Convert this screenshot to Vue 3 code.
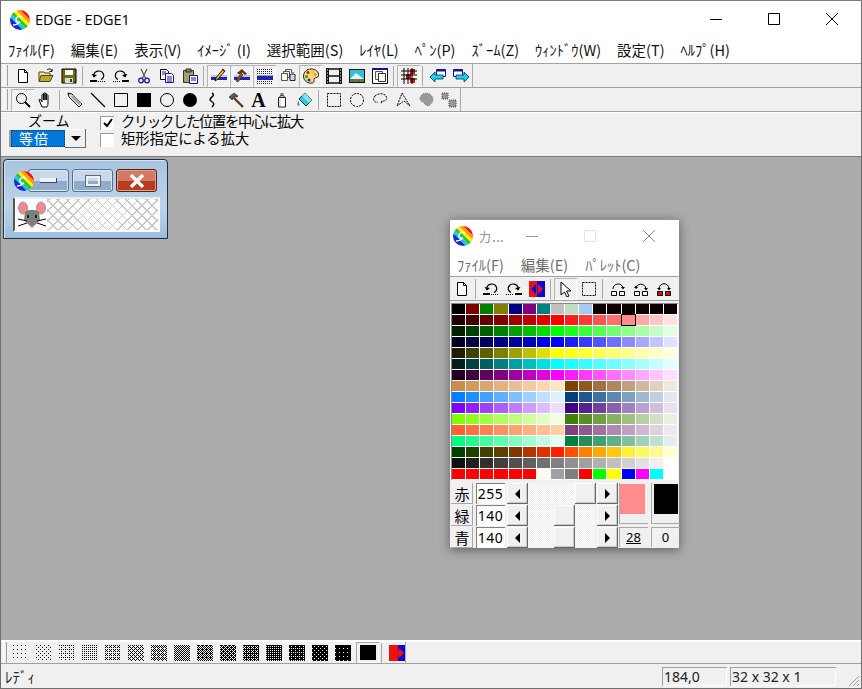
<template>
  <div class="edge">
    <!-- shared icon sheet -->
    <svg class="sheet" width="0" height="0">
      <defs>
        <clipPath id="logoClip"><circle cx="10" cy="10" r="10" /></clipPath>
        <symbol id="logo" viewBox="0 0 20 20">
          <g clip-path="url(#logoClip)">
            <g transform="rotate(45 10 10)">
              <rect x="-6" y="-6" width="32" height="9" fill="#ff1010" />
              <rect x="-6" y="3" width="32" height="3" fill="#ff9900" />
              <rect x="-6" y="6" width="32" height="3" fill="#ffee00" />
              <rect x="-6" y="9" width="32" height="3" fill="#22cc22" />
              <rect x="-6" y="12" width="32" height="3" fill="#19c8e8" />
              <rect x="-6" y="15" width="32" height="11" fill="#1a28d0" />
            </g>
          </g>
          <path d="M12 7c-3-2-6 0-6 3 0 2 2 3 4 2-2 2-4 3-7 3" fill="none" stroke="#fff" stroke-width="1.400" />
        </symbol>
        <symbol id="new" viewBox="0 0 16 16"><path d="M3.500 1.500h6l3 3v10h-9zM9.500 1.500v3h3" fill="#fff" stroke="#000" /></symbol>
        <symbol id="open" viewBox="0 0 16 16">
          <path d="M1 4h5l1 1h5v8H1z" fill="#f6e27a" stroke="#4d4a10" />
          <path d="M3 7.500h12l-3 6H1z" fill="#b8a635" stroke="#4d4a10" />
          <path d="M9 2c2-2 4-1 5 1M14 1v2.500h-2.500" fill="none" stroke="#000" />
        </symbol>
        <symbol id="save" viewBox="0 0 16 16">
          <path d="M1 1h14v14H1z" fill="#6e6e10" stroke="#000" />
          <path d="M4 2h8v5H4z" fill="#fff" /><path d="M4 10h8v5H4z" fill="#d8d8d8" /><path d="M9 11h2v3H9z" fill="#333" />
        </symbol>
        <symbol id="undo" viewBox="0 0 16 16">
          <path d="M4 9a5 4.500 0 1 1 7 2.500" fill="none" stroke="#000" stroke-width="1.200" /><path d="M1.500 6l2.500 3.500 3-2.500z" fill="#000" />
          <path d="M0 13h7" stroke="#000" stroke-width="2" /><path d="M8 13.500h8" stroke="#000" stroke-dasharray="1 1" />
        </symbol>
        <symbol id="redo" viewBox="0 0 16 16">
          <path d="M12 9a5 4.500 0 1 0-7 2.500" fill="none" stroke="#000" stroke-width="1.200" /><path d="M14.500 6L12 9.500 9 7z" fill="#000" />
          <path d="M9 13h7" stroke="#000" stroke-width="2" /><path d="M0 13.500h8" stroke="#000" stroke-dasharray="1 1" />
        </symbol>
        <symbol id="cut" viewBox="0 0 16 16">
          <path d="M5 1l4.500 9M11 1L6.500 10" stroke="#555" stroke-width="1.200" />
          <circle cx="5" cy="12.500" r="2.300" fill="none" stroke="#14149a" stroke-width="1.300" /><circle cx="11" cy="12.500" r="2.300" fill="none" stroke="#14149a" stroke-width="1.300" />
        </symbol>
        <symbol id="copy" viewBox="0 0 16 16">
          <path d="M1.500 1.500h6l2 2v8h-8z" fill="#fff" stroke="#000" /><path d="M6.500 5.500h6l2 2v7h-8z" fill="#fff" stroke="#14149a" />
          <path d="M3 4h4M3 6h3M8 9h5M8 11h5M8 13h5" stroke="#14149a" />
        </symbol>
        <symbol id="paste" viewBox="0 0 16 16">
          <path d="M1.500 2.500h10v12h-10z" fill="#a8a060" stroke="#333" /><path d="M4 1h5v3H4z" fill="#888" stroke="#222" />
          <path d="M7.500 7.500h8v8h-8z" fill="#fff" stroke="#14149a" /><path d="M9 10h5M9 12h5" stroke="#14149a" />
        </symbol>
        <symbol id="pen1" viewBox="0 0 16 16">
          <path d="M0 9h16v3H0z" fill="#2222aa" /><path d="M0 8h16" stroke="#8ba3d8" />
          <path d="M12 1l2 2-7 8-3 2 1-3z" fill="#e8d020" stroke="#111" /><path d="M12 1l2 2-1 1-2-2z" fill="#d01010" />
        </symbol>
        <symbol id="pen2" viewBox="0 0 16 16">
          <path d="M0 9h16v3H0z" fill="#2222aa" /><path d="M0 8h16" stroke="#8ba3d8" />
          <path d="M3 5l5-4 5 5-2 1-3-2.500-3 2z" fill="#5a3010" /><path d="M7 5l-5 8 2 1 5-7z" fill="#8a5020" stroke="#321" stroke-width=".6" />
        </symbol>
        <symbol id="dots" viewBox="0 0 16 16">
          <path d="M0 1.500h16M0 3.500h16M0 5.500h16" stroke="#222" stroke-dasharray="1 1" /><path d="M0 8h16v4H0z" fill="#2222aa" />
          <path d="M0 7.500h16" stroke="#8ba3d8" /><path d="M0 13.500h16M0 15.500h16" stroke="#222" stroke-dasharray="1 1" />
        </symbol>
        <symbol id="layers" viewBox="0 0 16 16">
          <path d="M5.500 1.500h6v5h-6z" fill="#eee" stroke="#555" /><path d="M3.500 3.500h6v6h-6z" fill="#eee" stroke="#555" />
          <path d="M1.500 5.500h6v7h-6z" fill="#fff" stroke="#555" /><path d="M10 6.500h5v6h-5z" fill="#c8d8f0" stroke="#222" /><path d="M11 4h3v3h-3z" fill="#888" />
        </symbol>
        <symbol id="palette" viewBox="0 0 16 16">
          <path d="M8 1c5 0 8 3 7.500 6.500-.5 3-4 1.500-4.500 3.500-.3 2 1 3-1.500 4C5 16 .5 13 .5 8 .5 4 4 1 8 1z" fill="#f4d878" stroke="#222" />
          <circle cx="5" cy="4.500" r="1.500" fill="#d81818" /><circle cx="9.500" cy="4" r="1.500" fill="#d8d020" /><circle cx="3.500" cy="8.500" r="1.500" fill="#20a020" /><circle cx="6" cy="12" r="1.500" fill="#2030d0" /><circle cx="12" cy="6.500" r="1.200" fill="#ff7a20" />
        </symbol>
        <symbol id="film" viewBox="0 0 16 16">
          <path d="M0 0h3v16H0zM13 0h3v16h-3z" fill="#111" /><path d="M3 1h10M3 8h10M3 15h10" stroke="#111" stroke-width="1.500" />
          <path d="M1 2h1M1 5h1M1 8h1M1 11h1M1 14h1M14 2h1M14 5h1M14 8h1M14 11h1M14 14h1" stroke="#fff" />
        </symbol>
        <symbol id="picture" viewBox="0 0 16 16">
          <path d="M0 1h16v14H0z" fill="#111" /><path d="M1 2h14v9H1z" fill="#2fc0e0" /><path d="M1 11l6-6 8 6z" fill="#e8f4f8" /><path d="M1 11h14v3H1z" fill="#4a8a3a" />
          <path d="M3 12h2M8 13h3" stroke="#c03030" />
        </symbol>
        <symbol id="windows" viewBox="0 0 16 16">
          <path d="M.5.500h15v15H.5z" fill="#fff" stroke="#111" /><path d="M0 0h16v2H0z" fill="#14149a" />
          <path d="M3.500 3.500h7v8h-7z" fill="#eee" stroke="#555" /><path d="M6.500 5.500h7v8h-7z" fill="#fff" stroke="#333" />
        </symbol>
        <symbol id="grid" viewBox="0 0 16 16">
          <path d="M9 1h5v5H9zM5 6h5v5H5zM9 10h5v5H9z" fill="#d01818" />
          <path d="M0 3h16M0 7h16M0 11h16M3 0v16M7 0v16M11 0v16" stroke="#000" />
        </symbol>
        <symbol id="arrowL" viewBox="0 0 16 16">
          <path d="M6.500 1.500h9v7h-9z" fill="#fff" stroke="#14149a" /><path d="M6.500 1.500h9v2h-9z" fill="#14149a" />
          <path d="M0 9l5-5v3h8v4H5v3z" fill="#10d8e8" stroke="#0a2a6a" stroke-width=".8" />
        </symbol>
        <symbol id="arrowR" viewBox="0 0 16 16">
          <path d="M.5 1.500h9v7h-9z" fill="#fff" stroke="#14149a" /><path d="M.5 1.500h9v2h-9z" fill="#14149a" />
          <path d="M16 9l-5-5v3H3v4h8v3z" fill="#10d8e8" stroke="#0a2a6a" stroke-width=".8" />
        </symbol>
        <symbol id="zoom" viewBox="0 0 16 16"><circle cx="6.500" cy="6.500" r="5" fill="none" stroke="#000" /><path d="M10 10l5 5" stroke="#000" stroke-width="1.800" /></symbol>
        <symbol id="hand" viewBox="0 0 16 16">
          <path d="M4 15L1 8c0-1 1-1 2 0l1 2V3c0-1 1.500-1 1.500 0v5-6.500c0-1 1.500-1 1.500 0V8 2c0-1 1.500-1 1.500 0v6-4.500c0-1 1.500-1 1.500 0V11c0 2-.5 3-1 4z" fill="#fff" stroke="#000" />
        </symbol>
        <symbol id="pencil" viewBox="0 0 16 16">
          <path d="M1 1l4 1 10 10-3 3L2 5z" fill="#ddd" stroke="#222" /><path d="M4 5l8 8 2-2-8-8z" fill="#aaa" /><path d="M1 1l2 .500-1.500 1.500z" fill="#000" />
        </symbol>
        <symbol id="line" viewBox="0 0 16 16"><path d="M1 1l14 14" stroke="#000" stroke-width="1.200" /></symbol>
        <symbol id="rect" viewBox="0 0 16 16"><path d="M1.500 1.500h13v13h-13z" fill="none" stroke="#000" /></symbol>
        <symbol id="rectFill" viewBox="0 0 16 16"><path d="M1 1h14v14H1z" fill="#000" /></symbol>
        <symbol id="circle" viewBox="0 0 16 16"><circle cx="8" cy="8" r="6.500" fill="none" stroke="#000" /></symbol>
        <symbol id="circleFill" viewBox="0 0 16 16"><circle cx="8" cy="8" r="7" fill="#000" /></symbol>
        <symbol id="curve" viewBox="0 0 16 16"><path d="M7 1c5 3-5 5-1 8 3 2 4 3 1 6" fill="none" stroke="#000" stroke-width="1.500" /></symbol>
        <symbol id="hammer" viewBox="0 0 16 16">
          <path d="M6 6l9 9" stroke="#6a3a10" stroke-width="2.400" /><path d="M1 5l5-4 4 3-1 1-2 0-3 3z" fill="#555" stroke="#222" stroke-width=".6" />
        </symbol>
        <symbol id="spray" viewBox="0 0 16 16">
          <path d="M4.500 5.500h7v9.500h-7z" fill="#fff" stroke="#222" /><path d="M5.500 5.500l1-2h3l1 2z" fill="#ddd" stroke="#222" /><path d="M6.500 1h3v2.500h-3z" fill="#777" /><path d="M6 7v7" stroke="#bbb" />
        </symbol>
        <symbol id="fill" viewBox="0 0 16 16">
          <path d="M8 1l7 7-6 6-7-7z" fill="#30c8e0" stroke="#134" /><path d="M8 1l7 7-3 3-7-7z" fill="#8ae0ec" />
          <path d="M1.500 9c-1 2-1.500 3-1 4s2 1 2 0-.5-2-1-4z" fill="#20a090" />
        </symbol>
        <symbol id="selRect" viewBox="0 0 16 16"><path d="M1.500 1.500h13v13h-13z" fill="none" stroke="#000" stroke-dasharray="2 1" /></symbol>
        <symbol id="selCircle" viewBox="0 0 16 16"><circle cx="8" cy="8" r="6.500" fill="none" stroke="#000" stroke-dasharray="2 1" /></symbol>
        <symbol id="selLasso" viewBox="0 0 16 16"><path d="M3 4c3-3 9-3 11 0 2 3-1 6-4 5-1 0-1 2 0 3M3 4C0 7 2 11 6 10" fill="none" stroke="#000" stroke-dasharray="2 1" /></symbol>
        <symbol id="selPoly" viewBox="0 0 16 16"><path d="M7 1l8 13-6-5-7 5z" fill="none" stroke="#000" stroke-dasharray="2 1" /></symbol>
        <symbol id="blob" viewBox="0 0 16 16"><path d="M5 2c4-2 9 0 10 5 0 4-2 4-3 6-3 2-5-1-7-3C2 9 0 6 5 2z" fill="#999" stroke="#777" stroke-dasharray="1 1" /></symbol>
        <symbol id="pattern" viewBox="0 0 16 16">
          <path d="M1 1h6v6H1zM8 8h7v7H8z" fill="#999" stroke="#444" stroke-dasharray="1 1" />
        </symbol>
        <symbol id="swap" viewBox="0 0 16 16">
          <path d="M0 0h16v16H0z" fill="#0808d8" /><path d="M0 0h8v16H0z" fill="#f01010" /><path d="M2 8l5-5v10z" fill="#0808d8" /><path d="M14 8L9 3v10z" fill="#f01010" />
        </symbol>
        <symbol id="fgbg" viewBox="0 0 16 16">
          <path d="M0 0h16v16H0z" fill="#0808d8" /><path d="M0 0h9v16H0z" fill="#f01010" /><path d="M7 6h3V3l5 5-5 5v-3H7z" fill="#f01010" />
        </symbol>
        <symbol id="cursor" viewBox="0 0 16 16"><path d="M3 1l10 9H8.500l2.500 5-2 1-2.500-5L3 14z" fill="#fff" stroke="#000" /></symbol>
        <symbol id="link1" viewBox="0 0 16 16">
          <path d="M3 8c0-6 9-7 10-1" fill="none" stroke="#000" /><path d="M11 6h4l-2 2.500z" fill="#000" />
          <path d="M1.500 10.500h5v4h-5zM9.500 10.500h5v4h-5z" fill="#fff" stroke="#000" />
        </symbol>
        <symbol id="link2" viewBox="0 0 16 16">
          <path d="M3 8c0-6 9-7 10 0" fill="none" stroke="#000" /><path d="M1 7h4L3 4.500zM11 7h4l-2 2.500z" fill="#000" />
          <path d="M1.500 10.500h5v4h-5zM9.500 10.500h5v4h-5z" fill="#fff" stroke="#000" />
        </symbol>
        <symbol id="link3" viewBox="0 0 16 16">
          <path d="M3 8c0-7 10-7 10 0" fill="none" stroke="#000" /><path d="M1 7h4L3 9.500zM11 7h4l-2 2.500z" fill="#000" />
          <path d="M1.500 10.500h5v4h-5zM9.500 10.500h5v4h-5z" fill="#e01010" stroke="#000" />
        </symbol>
        <symbol id="mouse" viewBox="0 0 30 30">
          <ellipse cx="6" cy="8" rx="4.500" ry="6" fill="#f08a92" stroke="#999" />
          <ellipse cx="24" cy="8" rx="4.500" ry="6" fill="#f08a92" stroke="#999" />
          <path d="M8 12c3-3 11-3 14 0l1 8-8 8-8-8z" fill="#808080" />
          <path d="M11 15v3M19 15v3" stroke="#000" stroke-width="1.500" />
          <path d="M1 19l9 2M1 26l9-3M29 19l-9 2M29 26l-9-3" stroke="#000" />
          <path d="M13 26h4l-2 2z" fill="#f08a92" />
        </symbol>
      </defs>
    </svg>

    <header class="title">
      <svg class="logo"><use href="#logo" /></svg>
      <span class="title-text">EDGE - EDGE1</span>
      <div class="caption">
        <svg width="14" height="14" viewBox="0 0 14 14"><path d="M1 7.500h12" stroke="#000" /></svg>
        <svg width="14" height="14" viewBox="0 0 14 14"><path d="M1.500 1.500h11v11h-11z" fill="none" stroke="#000" /></svg>
        <svg width="14" height="14" viewBox="0 0 14 14"><path d="M1 1l12 12M13 1L1 13" stroke="#000" /></svg>
      </div>
    </header>

    <nav class="menu">
      <span v-for="m in menus" :key="m">{{ m }}</span>
    </nav>

    <div class="bar">
      <div class="tools">
        <i class="grip"></i>
        <template v-for="(t, i) in toolsTop" :key="i">
          <i v-if="t === '|'" class="sep"></i>
          <b v-else class="btn" :class="{ down: t.endsWith('*') }"><svg class="ic"><use :href="'#' + t.replace('*', '')" /></svg></b>
        </template>
      </div>
    </div>
    <div class="bar">
      <div class="tools">
        <i class="grip"></i>
        <template v-for="(t, i) in toolsDraw" :key="i">
          <i v-if="t === '|'" class="sep"></i>
          <b v-else-if="t === 'A'" class="btn letter">A</b>
          <b v-else class="btn" :class="{ down: t.endsWith('*') }"><svg class="ic"><use :href="'#' + t.replace('*', '')" /></svg></b>
        </template>
      </div>
    </div>

    <section class="options">
      <div class="zoom-box">
        <div class="zoom-label">ズーム</div>
        <div class="combo">
          <span class="combo-value">等倍</span>
          <span class="combo-btn"><i class="tri-down"></i></span>
        </div>
      </div>
      <div class="checks">
        <label class="check"><span class="box"><svg width="12" height="12" viewBox="0 0 12 12"><path d="M2 6l3 3 5-7" fill="none" stroke="#000" stroke-width="2" /></svg></span><span class="check-text tight">クリックした位置を中心に拡大</span></label>
        <label class="check"><span class="box"></span><span class="check-text">矩形指定による拡大</span></label>
      </div>
    </section>

    <main class="mdi">
      <div class="mini">
        <div class="mini-head">
          <svg class="logo"><use href="#logo" /></svg>
          <span class="glass"><i class="g-min"></i></span>
          <span class="glass"><i class="g-max"></i></span>
          <span class="glass red">
            <svg width="18" height="14" viewBox="0 0 18 14"><path d="M3 1l12 12M15 1L3 13" stroke="#fff" stroke-width="3.400" /></svg>
          </span>
        </div>
        <div class="mini-body">
          <svg class="mouse"><use href="#mouse" /></svg>
          <div class="checker"></div>
        </div>
      </div>

      <div class="pal">
        <div class="pal-title">
          <svg class="logo"><use href="#logo" /></svg>
          <span class="pal-name">カ...</span>
          <div class="pal-caption">
            <svg width="12" height="12" viewBox="0 0 12 12"><path d="M0 6.500h12" stroke="#9a9a9a" /></svg>
            <svg width="12" height="12" viewBox="0 0 12 12"><path d="M.5.500h11v11H.5z" fill="none" stroke="#e2e2e2" /></svg>
            <svg width="14" height="14" viewBox="0 0 14 14"><path d="M1 1l12 12M13 1L1 13" stroke="#8a8a8a" /></svg>
          </div>
        </div>
        <div class="pal-menu">
          <span>ﾌｧｲﾙ(F)</span><span>編集(E)</span><span>ﾊﾟﾚｯﾄ(C)</span>
        </div>
        <div class="pal-tools">
          <template v-for="(t, i) in toolsPal" :key="i">
            <i v-if="t === '|'" class="sep"></i>
            <b v-else class="btn" :class="{ down: t.endsWith('*') }"><svg class="ic"><use :href="'#' + t.replace('*', '')" /></svg></b>
          </template>
        </div>
        <div class="swatches">
          <i v-for="(c, i) in colors" :key="i" :class="{ sel: i === 28 }" :style="{ background: c }"></i>
        </div>
        <div class="pal-bottom">
          <div class="sliders">
            <div v-for="s in sliders" :key="s.name" class="slider">
              <span class="s-name">{{ s.name }}</span>
              <span class="s-val">{{ s.value }}</span>
              <span class="raised s-arrow"><i class="tri-left"></i></span>
              <span class="track"><span class="raised thumb" :style="{ left: s.pos + 'px' }"></span></span>
              <span class="raised s-arrow"><i class="tri-right"></i></span>
            </div>
          </div>
          <div class="chips">
            <div class="chip-row">
              <span class="chip"><i class="c-fg"></i></span>
              <span class="chip"><i class="c-bg"></i></span>
            </div>
            <div class="num-row">
              <span class="num"><u>28</u></span>
              <span class="num">0</span>
            </div>
          </div>
        </div>
      </div>
    </main>

    <div class="patterns">
      <div class="pat-tools">
        <i class="grip"></i>
        <b v-for="(d, i) in patterns" :key="i" class="pat">
          <svg width="16" height="16" viewBox="0 0 16 16"><path :d="d" fill="#000" shape-rendering="crispEdges" /></svg>
        </b>
        <b class="pat pressed"><i class="black"></i></b>
        <i class="sep"></i>
        <svg class="ic swap-ic"><use href="#fgbg" /></svg>
      </div>
    </div>

    <footer class="status">
      <span class="ready">ﾚﾃﾞｨ</span>
      <span class="cell c1">184,0</span>
      <span class="cell c2">32 x 32 x 1</span>
      <svg class="sizer" width="14" height="14" viewBox="0 0 14 14"><path d="M13 3L3 13M13 7l-6 6M13 11l-2 2" stroke="#9a9a9a" /></svg>
    </footer>
  </div>
</template>

<script setup>
const menus = ['ﾌｧｲﾙ(F)', '編集(E)', '表示(V)', 'ｲﾒｰｼﾞ (I)', '選択範囲(S)', 'ﾚｲﾔ(L)', 'ﾍﾟﾝ(P)', 'ｽﾞｰﾑ(Z)', 'ｳｨﾝﾄﾞｳ(W)', '設定(T)', 'ﾍﾙﾌﾟ(H)']

// a trailing * means the button is pressed
const toolsTop = ['new', 'open', 'save', '|', 'undo', 'redo', 'cut', 'copy', 'paste', '|', 'pen1*', 'pen2*', 'dots*', 'layers', 'palette*', 'film', 'picture', 'windows', '|', 'grid*', '|', 'arrowL', 'arrowR']
const toolsDraw = ['zoom*', 'hand', '|', 'pencil', 'line', 'rect', 'rectFill', 'circle', 'circleFill', 'curve', 'hammer', 'A', 'spray', 'fill', '|', 'selRect', 'selCircle', 'selLasso', 'selPoly', 'blob', 'pattern']
const toolsPal = ['new', '|', 'undo', 'redo', 'swap', '|', 'cursor*', 'selRect', '|', 'link1', 'link2', 'link3']

const hex = (r, g, b) => `rgb(${r},${g},${b})`

// dark to full colour in steps of 32, then to white in steps of 28
function ramp(r, g, b) {
  const out = []
  for (let i = 1; i <= 8; i++) {
    const k = Math.min(255, i * 32) / 255
    out.push(hex(Math.round(r * k), Math.round(g * k), Math.round(b * k)))
  }
  for (let i = 1; i <= 8; i++) {
    const v = i * 28
    out.push(hex(Math.max(r, v), Math.max(g, v), Math.max(b, v)))
  }
  return out
}

function blend(a, b, n) {
  const out = []
  for (let i = 0; i < n; i++) {
    const t = i / (n - 1)
    out.push(hex(...a.map((v, j) => Math.round(v + (b[j] - v) * t))))
  }
  return out
}

const colors = [
  '#000', '#800000', '#008000', '#808000', '#000080', '#800080', '#008080', '#c0c0c0', '#c0dcc0', '#a6caf0',
  '#0c0000', '#0c0000', '#0c0000', '#0c0000', '#0c0000', '#0c0000',
  ...ramp(255, 0, 0), ...ramp(0, 255, 0), ...ramp(0, 0, 255),
  ...ramp(255, 255, 0), ...ramp(0, 255, 255), ...ramp(255, 0, 255),
  ...blend([204, 140, 76], [255, 228, 196], 8), ...blend([128, 64, 0], [240, 232, 224], 8),
  ...blend([0, 128, 255], [224, 240, 255], 8), ...blend([0, 64, 128], [224, 232, 240], 8),
  ...blend([128, 0, 255], [236, 220, 255], 8), ...blend([64, 0, 128], [232, 224, 240], 8),
  ...blend([128, 255, 0], [240, 255, 224], 8), ...blend([64, 128, 0], [232, 240, 224], 8),
  ...blend([255, 96, 48], [255, 208, 160], 8), ...blend([128, 64, 128], [240, 232, 240], 8),
  ...blend([0, 255, 128], [224, 255, 240], 8), ...blend([0, 128, 64], [224, 240, 232], 8),
  '#004000', '#204000', '#404000', '#604000', '#803800', '#b03800', '#e03000', '#ff2000',
  '#ff5000', '#ff8000', '#ffa800', '#ffc810', '#fff030', '#fff860', '#fffa90', '#ffffd0',
  '#101010', '#202020', '#303030', '#404040', '#505050', '#606060', '#707070', '#808080',
  '#909090', '#a0a0a0', '#b0b0b0', '#c0c0c0', '#d0d0d0', '#e0e0e0', '#f0f0f0', '#ffffff',
  '#ff0000', '#ff0000', '#ff0000', '#ff0000', '#ff0000', '#ff0000', '#fffbf0', '#a0a0a4',
  '#808080', '#ff0000', '#00ff00', '#ffff00', '#0000ff', '#ff00ff', '#00ffff', '#ffffff'
]

const sliders = [
  { name: '赤', value: 255, pos: 47 },
  { name: '緑', value: 140, pos: 26 },
  { name: '青', value: 140, pos: 26 }
]

// ordered dither tiles for the 15 fill patterns
const bayer = [[0, 8, 2, 10], [12, 4, 14, 6], [3, 11, 1, 9], [15, 7, 13, 5]]
const patterns = Array.from({ length: 15 }, (_, n) => {
  let d = ''
  for (let y = 0; y < 16; y++) {
    for (let x = 0; x < 16; x++) {
      if (bayer[y % 4][x % 4] <= n) d += `M${x} ${y}h1v1h-1z`
    }
  }
  return d
})
</script>

<style scoped>
.edge {
  width: 862px;
  height: 689px;
  box-sizing: border-box;
  border: 1px solid #6f6f6f;
  border-top-color: #7a7a7a;
  display: flex;
  flex-direction: column;
  background: #f0f0f0;
  font-family: "Noto Sans CJK JP", "Noto Sans", sans-serif;
  font-size: 14px;
  color: #000;
  overflow: hidden;
}
.sheet { position: absolute; }
.logo { width: 20px; height: 20px; flex: none; }

.title {
  height: 37px;
  flex: none;
  display: flex;
  align-items: center;
  background: #fff;
  padding-left: 9px;
}
.title-text {
  font-family: "Open Sans", sans-serif;
  font-size: 14.500px;
  margin-left: 5px;
}
.caption {
  margin-left: auto;
  display: flex;
  gap: 44px;
  padding-right: 22px;
  margin-top: -2px;
}

.menu {
  height: 25px;
  flex: none;
  box-sizing: border-box;
  display: flex;
  align-items: center;
  gap: 16px;
  padding: 0 0 2px 7px;
  background: #fff;
  font-size: 14.500px;
  white-space: nowrap;
  color: #111;
}

.bar {
  height: 24px;
  flex: none;
  border-top: 1px solid #a0a0a0;
  box-sizing: border-box;
  display: flex;
}
.tools {
  display: flex;
  align-items: center;
  padding-left: 3px;
  border-right: 1px solid #a8a8a8;
}
.grip {
  width: 2px;
  height: 21px;
  margin-right: 3px;
  border-left: 1px solid #fff;
  border-right: 1px solid #a0a0a0;
}
.btn {
  width: 23px;
  height: 22px;
  flex: none;
  display: flex;
  align-items: center;
  justify-content: center;
  box-sizing: border-box;
}
.btn.down {
  background: repeating-conic-gradient(#fff 0 25%, #e8e8e8 0 50%) 0 0/2px 2px;
  box-shadow: inset 1px 1px #b4b4b4, inset -1px -1px #fff;
}
.ic { width: 16px; height: 16px; }
.sep {
  width: 6px;
  height: 20px;
  flex: none;
  box-sizing: border-box;
  border-left: 1px solid #a8a8a8;
  border-right: 3px solid transparent;
  margin-left: 2px;
  margin-right: -2px;
}
.letter { font-family: "Liberation Serif", serif; font-weight: 700; font-size: 20px; line-height: 1; }

.options {
  height: 46px;
  flex: none;
  box-sizing: border-box;
  border-top: 1px solid #a0a0a0;
  border-bottom: 1px solid #7c7c7c;
  box-shadow: inset 0 1px #fff;
  display: flex;
  padding-left: 10px;
}
.zoom-box { width: 78px; margin-right: 11px; }
.zoom-label { font-size: 14px; line-height: 16px; padding-left: 17px; }
.combo { display: flex; align-items: center; margin-top: 1px; }
.combo-value {
  width: 54px;
  height: 17px;
  box-sizing: border-box;
  background: #0078d7;
  color: #fff;
  border: 1px dotted #003c70;
  box-shadow: -2px 0 0 #9a9a9a;
  font-size: 14px;
  line-height: 15px;
  padding-left: 7px;
  letter-spacing: 1px;
}
.combo-btn {
  width: 21px;
  height: 19px;
  display: flex;
  align-items: center;
  justify-content: center;
  background: #f0f0f0;
  box-shadow: inset -1px -1px #696969, inset 1px 1px #fff;
}
.tri-down { width: 0; height: 0; border: 5px solid transparent; border-top: 5px solid #000; border-bottom: 0; }
.checks { white-space: nowrap; margin-top: 2px; }
.check { display: flex; align-items: center; height: 17px; }
.box {
  width: 14px;
  height: 14px;
  flex: none;
  display: flex;
  align-items: center;
  justify-content: center;
  background: #fff;
  box-sizing: border-box;
  border-left: 1px solid #9a9a9a;
  border-top: 1px solid #9a9a9a;
  margin-right: 7px;
}
.check-text {
  font-family: "Liberation Sans", "Noto Sans CJK JP", sans-serif;
  font-size: 14.300px;
  line-height: 17px;
}
.tight { letter-spacing: -1.300px; }

.mdi {
  flex: 1;
  position: relative;
  background: #ababab;
  min-height: 0;
}

.mini {
  position: absolute;
  left: 2px;
  top: 2px;
  width: 165px;
  height: 80px;
  box-sizing: border-box;
  border: 1px solid #1c3044;
  border-radius: 4px 4px 0 0;
  background: linear-gradient(#a8c4e0, #bcd4ea 60%, #9cbcdc);
  box-shadow: inset 1px 1px #d6e4f2;
}
.mini-head {
  display: flex;
  align-items: center;
  padding: 9px 0 0 10px;
  height: 23px;
}
.mini-head .logo { margin-right: -6px; position: relative; z-index: 1; }
.glass {
  width: 41px;
  height: 23px;
  margin-right: 3px;
  box-sizing: border-box;
  border: 1px solid #56708c;
  border-radius: 3px;
  display: flex;
  align-items: center;
  justify-content: center;
  background: linear-gradient(#c6d8ea 50%, #8fadca 50%);
  box-shadow: inset 0 0 0 1px #dbe7f2;
}
.glass.red {
  background: linear-gradient(#d47a64 50%, #b83d20 50%);
  border-color: #5a2014;
  box-shadow: inset 0 0 0 1px #e0a090;
}
.g-min { width: 16px; height: 4px; background: #eef2f6; border: 1px solid #445; border-width: 0 1px 1px 0; }
.g-max { width: 14px; height: 10px; box-sizing: border-box; border: 2px solid #eef2f6; outline: 1px solid #667; }
.mini-body {
  display: flex;
  margin: 5px 0 0 9px;
  width: 147px;
  height: 35px;
  box-sizing: border-box;
  border: 2px solid #fff;
  border-left-color: #555;
  border-top-color: #e8eef4;
  background: #fff;
}
.mouse { width: 30px; height: 30px; flex: none; margin-left: 2px; margin-top: 1px; }
.checker {
  flex: 1;
  background-color: #fff;
  background-image:
    repeating-linear-gradient(45deg, #c8c8c8 0 1px, transparent 1px 7px),
    repeating-linear-gradient(-45deg, #c8c8c8 0 1px, transparent 1px 7px);
}

.pal {
  position: absolute;
  left: 449px;
  top: 62px;
  width: 229px;
  height: 329px;
  box-sizing: border-box;
  background: #f0f0f0;
  box-shadow: 0 2px 10px rgba(0, 0, 0, 0.45);
  border-top: 1px solid #9a9a9a;
}
.pal-title {
  height: 32px;
  display: flex;
  align-items: center;
  background: #fff;
  padding-left: 3px;
}
.pal-name { color: #9a9a9a; margin-left: 5px; font-family: "Noto Sans CJK JP", sans-serif; font-size: 14px; }
.pal-caption {
  margin-left: auto;
  display: flex;
  align-items: center;
  gap: 46px;
  padding-right: 23px;
}
.pal-menu {
  height: 24px;
  display: flex;
  align-items: center;
  gap: 17px;
  padding-left: 7px;
  background: #fff;
  color: #6d6d6d;
  font-size: 14.500px;
  white-space: nowrap;
  border-bottom: 1px solid #a0a0a0;
}
.pal-tools {
  height: 24px;
  display: flex;
  align-items: center;
  padding-left: 0;
  border-bottom: 1px solid #a0a0a0;
  box-sizing: border-box;
}
.swatches {
  display: grid;
  grid-template-columns: repeat(16, 1fr);
  grid-auto-rows: 10px;
  gap: 1px;
  margin: 2px 1px 0 1px;
  padding: 1px;
  background: #fff;
  box-shadow: inset 1px 1px #888;
}
.swatches i { display: block; position: relative; }
.swatches i.sel { outline: 1px solid #000; }

.pal-bottom { display: flex; margin-top: 3px; padding-left: 1px; }
.sliders { display: flex; flex-direction: column; gap: 1px; width: 167px; }
.slider { display: flex; height: 21px; align-items: stretch; }
.s-name {
  width: 22px;
  text-align: center;
  font-size: 15px;
  line-height: 21px;
  box-shadow: inset -1px -1px #a8a8a8;
}
.s-val {
  width: 29px;
  margin-left: 3px;
  background: #fff;
  box-shadow: inset 1px 1px #808080;
  font-family: "Noto Sans", sans-serif;
  font-size: 14px;
  line-height: 21px;
  padding-left: 2px;
  box-sizing: border-box;
  letter-spacing: 0.4px;
}
.raised {
  background: #f0f0f0;
  box-shadow: inset -1px -1px #696969, inset 1px 1px #fff, inset -2px -2px #c8c8c8;
}
.s-arrow {
  width: 21px;
  flex: none;
  display: flex;
  align-items: center;
  justify-content: center;
  margin-left: 2px;
}
.track {
  position: relative;
  width: 68px;
  background: repeating-conic-gradient(#fff 0 25%, #eee 0 50%) 0 0/2px 2px;
}
.thumb { position: absolute; top: 0; bottom: 0; width: 21px; }
.tri-left { width: 0; height: 0; border: 5px solid transparent; border-right: 5px solid #000; border-left: 0; }
.tri-right { width: 0; height: 0; border: 5px solid transparent; border-left: 5px solid #000; border-right: 0; }

.chips { flex: 1; display: flex; flex-direction: column; margin-left: 1px; }
.chip-row { display: flex; gap: 3px; height: 41px; }
.chip {
  width: 29px;
  box-sizing: border-box;
  box-shadow: inset 1px 0 #a8a8a8, inset 0 -1px #a8a8a8;
  padding: 1px 0 0 1px;
  display: block;
}
.chip i { display: block; }
.c-fg { width: 25px; height: 30px; background: #ff8c8c; }
.c-bg { width: 24px; height: 30px; background: #000; margin-left: 2px; }
.num-row { display: flex; gap: 3px; margin-top: 3px; }
.num {
  width: 29px;
  height: 20px;
  box-sizing: border-box;
  box-shadow: inset 1px 1px #a8a8a8;
  text-align: center;
  font-family: "Noto Sans", sans-serif;
  font-size: 13px;
  line-height: 20px;
}

.patterns {
  height: 24px;
  flex: none;
  box-sizing: border-box;
  border-top: 2px solid #fff;
  border-bottom: 1px solid #a0a0a0;
  display: flex;
}
.pat-tools {
  display: flex;
  align-items: center;
  padding-left: 2px;
  width: 405px;
  box-sizing: border-box;
  border-right: 1px solid #a8a8a8;
}
.pat-tools .grip { margin-right: 2px; }
.pat {
  width: 23px;
  height: 21px;
  flex: none;
  display: flex;
  align-items: center;
  justify-content: center;
}
.pat.pressed {
  box-shadow: inset 1px 1px #a8a8a8, inset -1px -1px #fff;
  margin-left: 2px;
}
.black { width: 16px; height: 15px; background: #000; display: block; }
.swap-ic { margin-left: 4px; }

.status {
  height: 24px;
  flex: none;
  display: flex;
  align-items: center;
  position: relative;
  font-size: 15px;
}
.ready { margin-left: 4px; color: #222; }
.cell {
  position: absolute;
  top: 3px;
  height: 19px;
  box-sizing: border-box;
  box-shadow: inset 1px 1px #a0a0a0, inset -1px -1px #fff;
  font-family: "Noto Sans", sans-serif;
  font-size: 14px;
  line-height: 20px;
  padding-left: 2px;
  color: #222;
  white-space: nowrap;
}
.c1 { left: 661px; width: 65px; }
.c2 { left: 729px; width: 106px; }
.sizer { position: absolute; right: 1px; bottom: 1px; }
</style>
